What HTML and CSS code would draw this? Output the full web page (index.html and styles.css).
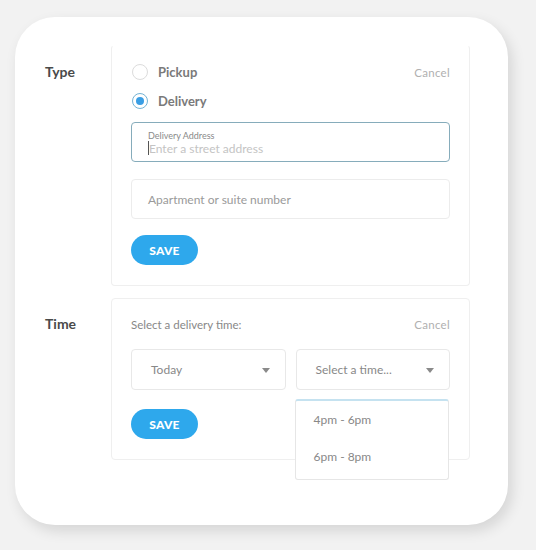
FILE: index.html
```html
<!DOCTYPE html>
<html lang="en">
<head>
    <meta charset="UTF-8">
    <meta name="viewport" content="width=device-width, initial-scale=1.0">
    <title>Delivery options</title>
    <link rel="stylesheet" href="styles.css">
</head>
<body>
    <div class="card">
        <div class="row">
            <div class="row-label type-label">Type</div>
            <div class="panel type-panel">
                <div class="radio-line">
                    <span class="radio"></span>
                    <span class="radio-text">Pickup</span>
                    <span class="cancel">Cancel</span>
                </div>
                <div class="radio-line">
                    <span class="radio checked"></span>
                    <span class="radio-text">Delivery</span>
                </div>
                <div class="field focused">
                    <div class="field-label">Delivery Address</div>
                    <div class="field-input"><span class="caret"></span>Enter a street address</div>
                </div>
                <div class="field">
                    <div class="field-placeholder">Apartment or suite number</div>
                </div>
                <button class="save">SAVE</button>
            </div>
        </div>

        <div class="row">
            <div class="row-label time-label">Time</div>
            <div class="panel time-panel">
                <div class="time-head">
                    <span>Select a delivery time:</span>
                    <span class="cancel">Cancel</span>
                </div>
                <div class="selects">
                    <div class="select">
                        <span>Today</span>
                        <span class="arrow"></span>
                    </div>
                    <div class="select">
                        <span>Select a time...</span>
                        <span class="arrow"></span>
                        <div class="dropdown">
                            <div class="option">4pm - 6pm</div>
                            <div class="option">6pm - 8pm</div>
                        </div>
                    </div>
                </div>
                <button class="save">SAVE</button>
            </div>
        </div>
    </div>
</body>
</html>
```

FILE: styles.css
```css
body {
    margin: 0;
    padding: 17px 0 0 15px;
    background: #f2f2f2;
    font-family: 'Lato', 'Liberation Sans', sans-serif;
    color: #555;
    height: 550px;
    box-sizing: border-box;
    overflow: hidden;
}

.card {
    width: 493px;
    height: 508px;
    box-sizing: border-box;
    background: #fff;
    border-radius: 40px;
    padding: 28px 38px 0 30px;
    box-shadow: 4px 6px 14px rgba(0, 0, 0, 0.12);
    display: flex;
    flex-direction: column;
    gap: 12px;
}

.row {
    display: flex;
}

.row-label {
    width: 66px;
    flex-shrink: 0;
    font-size: 14px;
    font-weight: 700;
    color: #4a4a4a;
}

.type-label {
    padding-top: 18px;
}

.time-label {
    padding-top: 17px;
}

.panel {
    width: 359px;
    box-sizing: border-box;
    border: 1px solid #efefef;
    border-radius: 4px;
    position: relative;
}

.type-panel {
    border-top-color: #fff;
    padding: 16px 19px 20px 19px;
}

.radio-line {
    display: flex;
    align-items: center;
    height: 20px;
    margin-bottom: 9px;
}

.radio {
    width: 14px;
    height: 14px;
    border: 1px solid #dcdcdc;
    border-radius: 50%;
    margin-left: 1px;
    margin-right: 10px;
    position: relative;
}

.radio.checked {
    border-color: #74b3d4;
}

.radio.checked::after {
    content: '';
    position: absolute;
    left: 3px;
    top: 3px;
    width: 8px;
    height: 8px;
    border-radius: 50%;
    background: #3a9ee4;
}

.radio-text {
    font-size: 13px;
    font-weight: 700;
    color: #7a7a7a;
}

.cancel {
    margin-left: auto;
    font-size: 11.5px;
    color: #b0b0b0;
    letter-spacing: 0.3px;
}

.field {
    height: 40px;
    box-sizing: border-box;
    border: 1px solid #ececec;
    border-radius: 4px;
    padding: 0 16px;
    margin-bottom: 16px;
    display: flex;
    flex-direction: column;
    justify-content: center;
}

.field.focused {
    border-color: #86acbb;
    margin-top: 11px;
    margin-bottom: 17px;
}

.field-label {
    font-size: 9px;
    color: #8a8a8a;
    margin-top: 1px;
}

.field-input {
    font-size: 12px;
    color: #c4c4c4;
    display: flex;
    align-items: center;
}

.caret {
    width: 1px;
    height: 14px;
    background: #555;
}

.field-placeholder {
    font-size: 12px;
    color: #9a9a9a;
    margin-top: 1px;
}

.save {
    display: block;
    width: 67px;
    height: 30px;
    border: none;
    border-radius: 15px;
    background: #2ea8ec;
    color: #fff;
    font-family: inherit;
    font-size: 12px;
    font-weight: 900;
    letter-spacing: 0.2px;
    padding: 0;
}

.time-panel {
    padding: 18px 19px 20px 19px;
}

.time-head {
    display: flex;
    align-items: center;
    height: 15px;
    font-size: 11.5px;
    color: #888;
}

.selects {
    display: flex;
    gap: 10px;
    margin-top: 17px;
    margin-bottom: 19px;
}

.select {
    flex: 1;
    height: 41px;
    box-sizing: border-box;
    border: 1px solid #e8e8e8;
    border-radius: 4px;
    padding: 0 15px 0 19px;
    display: flex;
    align-items: center;
    justify-content: space-between;
    font-size: 12px;
    color: #888;
    position: relative;
}

.arrow {
    width: 0;
    height: 0;
    border-left: 4px solid transparent;
    border-right: 4px solid transparent;
    border-top: 5px solid #8a8a8a;
    margin-top: 2px;
}

.dropdown {
    position: absolute;
    left: -2px;
    top: 49px;
    width: 154px;
    box-sizing: border-box;
    background: #fff;
    border: 1px solid #e6e6e6;
    border-top: 2px solid #c5e2f0;
    border-radius: 3px;
    padding-bottom: 4px;
    z-index: 2;
}

.option {
    height: 37px;
    line-height: 37px;
    padding-left: 18px;
    font-size: 12px;
    color: #888;
}
```
